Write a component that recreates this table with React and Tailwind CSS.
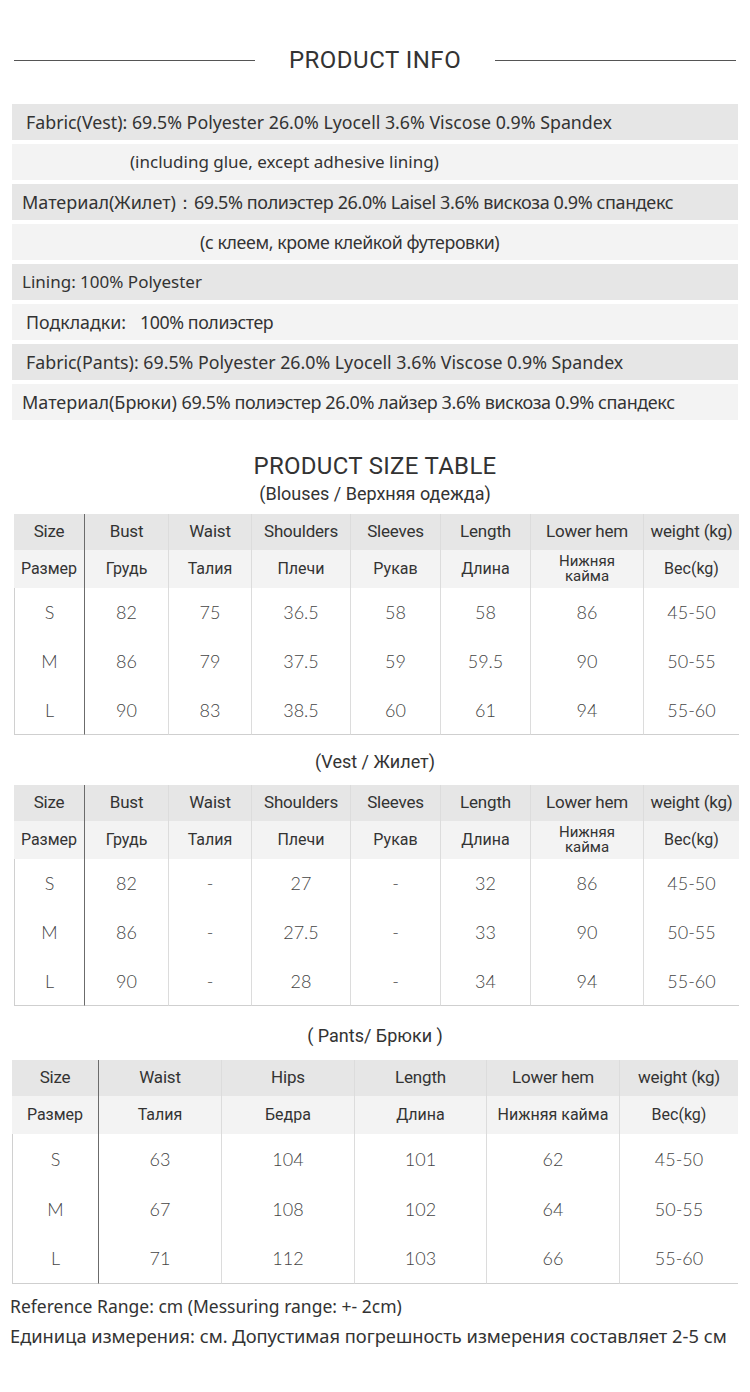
import React from 'react';

const infoRows = [
  { dark: true, pad: 'pl-[14px]', size: 'text-[17.8px]', label: 'Fabric(Vest): 69.5% Polyester 26.0% Lyocell 3.6% Viscose 0.9% Spandex' },
  { dark: false, pad: 'pl-[118px]', size: 'text-[17px]', label: '(including glue, except adhesive lining)' },
  { dark: true, pad: 'pl-[10px]', size: 'text-[18px]', label: 'Материал(Жилет)：', rest: '69.5% полиэстер 26.0% Laisel 3.6% вискоза 0.9% спандекс' },
  { dark: false, pad: 'pl-[188px]', size: 'text-[17.8px]', label: '', rest: '(с клеем, кроме клейкой футеровки)' },
  { dark: true, pad: 'pl-[10px]', size: 'text-[17px]', label: 'Lining: 100% Polyester' },
  { dark: false, pad: 'pl-[14px]', size: 'text-[17.8px]', label: 'Подкладки:   ', rest: '100% полиэстер' },
  { dark: true, pad: 'pl-[14px]', size: 'text-[17.8px]', label: 'Fabric(Pants): 69.5% Polyester 26.0% Lyocell 3.6% Viscose 0.9% Spandex' },
  { dark: false, pad: 'pl-[10px]', size: 'text-[18px]', label: 'Материал(Брюки) ', rest: '69.5% полиэстер 26.0% лайзер 3.6% вискоза 0.9% спандекс' },
];

const topHead = ['Size', 'Bust', 'Waist', 'Shoulders', 'Sleeves', 'Length', 'Lower hem', 'weight (kg)'];
const topSub = ['Размер', 'Грудь', 'Талия', 'Плечи', 'Рукав', 'Длина', 'Нижняя\nкайма', 'Вес(kg)'];
const topCols = '70px 84px 83px 99px 90px 90px 113px 96px';

const blouseRows = [
  ['S', '82', '75', '36.5', '58', '58', '86', '45-50'],
  ['M', '86', '79', '37.5', '59', '59.5', '90', '50-55'],
  ['L', '90', '83', '38.5', '60', '61', '94', '55-60'],
];

const vestRows = [
  ['S', '82', '-', '27', '-', '32', '86', '45-50'],
  ['M', '86', '-', '27.5', '-', '33', '90', '50-55'],
  ['L', '90', '-', '28', '-', '34', '94', '55-60'],
];

const pantsHead = ['Size', 'Waist', 'Hips', 'Length', 'Lower hem', 'weight (kg)'];
const pantsSub = ['Размер', 'Талия', 'Бедра', 'Длина', 'Нижняя кайма', 'Вес(kg)'];
const pantsCols = '86px 123px 133px 132px 133px 119px';
const pantsRows = [
  ['S', '63', '104', '101', '62', '45-50'],
  ['M', '67', '108', '102', '64', '50-55'],
  ['L', '71', '112', '103', '66', '55-60'],
];

const cellBorder = (i) =>
  i === 0 ? '' : i === 1 ? 'border-l border-[#6b6b6b]' : 'border-l border-[#dcdcdc]';

const SizeTable = ({ cols, head, sub, rows, rowH = 'h-[49px]', className }) => (
  <div className={`grid ${className}`} style={{ gridTemplateColumns: cols }}>
    {head.map((h, i) => (
      <div
        key={`h${i}`}
        className={`h-[36px] flex items-center justify-center bg-[#e6e6e6] text-[17px] text-[#333] tracking-[-0.2px] ${cellBorder(i)}`}
      >
        {h}
      </div>
    ))}
    {sub.map((h, i) => (
      <div
        key={`s${i}`}
        className={`h-[38px] flex items-center justify-center bg-[#f3f3f3] text-[#333] text-center whitespace-pre-line ${
          h.includes('\n') ? 'text-[15px] leading-[15px]' : 'text-[16px]'
        } ${cellBorder(i)}`}
      >
        {h}
      </div>
    ))}
    {rows.map((r, ri) =>
      r.map((v, i) => (
        <div
          key={`r${ri}-${i}`}
          className={`${rowH} flex items-center justify-center font-['Lato',sans-serif] font-light text-[18px] text-[#444] ${
            i === 0 ? 'border-l border-[#d0d0d0]' : cellBorder(i)
          } ${ri === 2 ? 'border-b border-b-[#cfcfcf]' : ''}`}
        >
          {v}
        </div>
      ))
    )}
  </div>
);

export default function App() {
  return (
    <div className="w-[750px] h-[1392px] bg-white font-['Roboto','Noto_Sans',sans-serif] text-[#333] overflow-hidden">
      {/* Product info header */}
      <div className="flex items-center pt-[46px] px-[14px]">
        <div className="flex-1 h-px bg-[#555]" />
        <h1 className="mx-[34px] text-[24px] leading-[28px] tracking-[0.5px] text-[#333]">PRODUCT INFO</h1>
        <div className="flex-1 h-px bg-[#555]" />
      </div>

      <div className="mx-[12px] mt-[30px] flex flex-col gap-[4px] font-['Noto_Sans',sans-serif]">
        {infoRows.map((row, i) => (
          <div
            key={i}
            className={`h-[36px] flex items-center whitespace-pre ${row.size} ${row.pad} ${
              row.dark ? 'bg-[#e6e6e6]' : 'bg-[#f3f3f3]'
            }`}
          >
            <span>{row.label}</span>
            {row.rest && <span className="tracking-[-0.4px]">{row.rest}</span>}
          </div>
        ))}
      </div>

      {/* Size tables */}
      <div className="mt-[32px] text-center">
        <h2 className="text-[24px] leading-[28px] tracking-[0.3px]">PRODUCT SIZE TABLE</h2>
        <p className="text-[18px] leading-[26px] mt-[1px]">(Blouses / Верхняя одежда)</p>
      </div>
      <SizeTable cols={topCols} head={topHead} sub={topSub} rows={blouseRows} className="ml-[14px] mt-[7px]" />

      <p className="text-center text-[18px] leading-[26px] mt-[14px]">(Vest / Жилет)</p>
      <SizeTable cols={topCols} head={topHead} sub={topSub} rows={vestRows} className="ml-[14px] mt-[10px]" />

      <p className="text-center text-[18px] leading-[26px] mt-[17px]">( Pants/ Брюки )</p>
      <SizeTable
        cols={pantsCols}
        head={pantsHead}
        sub={pantsSub}
        rows={pantsRows}
        rowH="h-[50px]"
        className="ml-[12px] mt-[11px]"
      />

      {/* Footer notes */}
      <div className="pl-[10px] mt-[9px] font-['Noto_Sans',sans-serif]">
        <p className="text-[17.5px] leading-[26px]">Reference Range: cm (Messuring range: +- 2cm)</p>
        <p className="text-[18.3px] leading-[30px] mt-[2px]">Единица измерения: см. Допустимая погрешность измерения составляет 2-5 см</p>
      </div>
    </div>
  );
}
